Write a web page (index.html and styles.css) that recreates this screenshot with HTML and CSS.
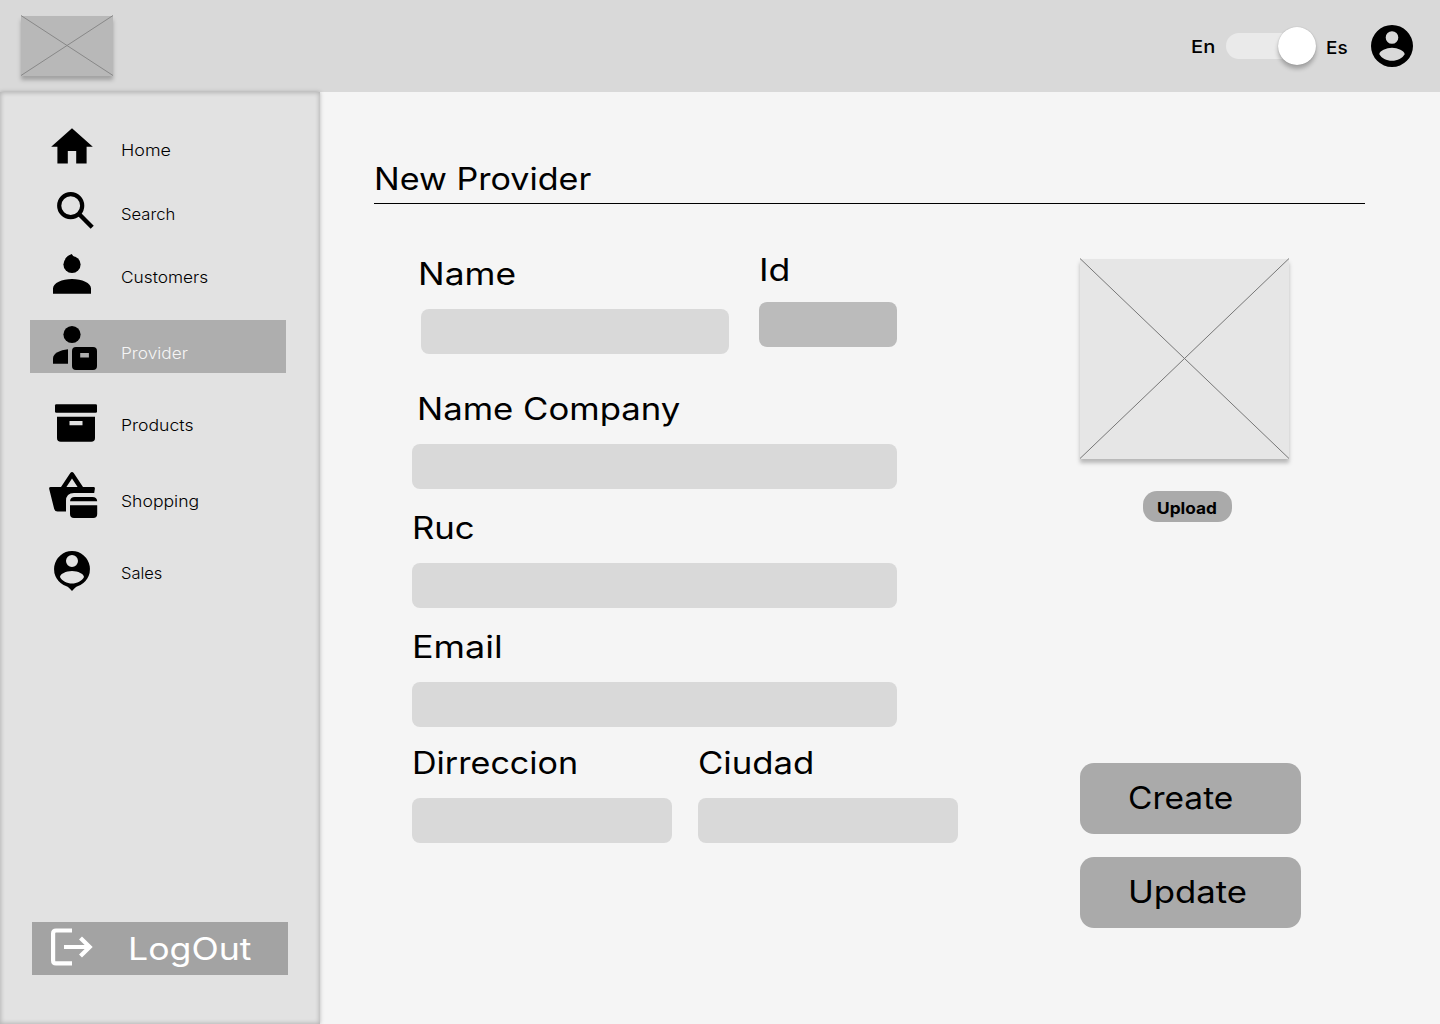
FILE: index.html
```html
<!DOCTYPE html>
<html lang="en">
<head>
<meta charset="utf-8">
<title>New Provider</title>
<link rel="stylesheet" href="styles.css">
</head>
<body>
<header class="topbar">
  <svg class="logo" viewBox="0 0 92 60"><path d="M0 -.5L92 59.500M92 -.5L0 59.500"/></svg>
  <span class="lang lang-en">En</span>
  <div class="toggle"><div class="knob"></div></div>
  <span class="lang lang-es">Es</span>
  <svg class="account" viewBox="0 0 42 42"><path fill-rule="evenodd" d="M21 0a21 21 0 1 1 0 42a21 21 0 1 1 0-42zM21 6.2a6.3 6.3 0 1 0 0 12.6a6.3 6.3 0 1 0 0-12.6zM21 22.8C15.500 22.800 8.300 26 8.300 29.200C10.500 33 15.500 35.800 21 35.800C26.500 35.800 31.500 33 33.700 29.200C33.700 26 26.500 22.800 21 22.800z"/></svg>
</header>
<div class="page">
  <aside class="sidebar">
    <nav class="menu">
      <a class="item"><svg class="icon" viewBox="47 117 52 53"><path d="M67.8 163.600v-12.500h8.400v12.500h10.400v-16.800h6.200L72 128.200L51.200 146.800h6.200v16.800z"/></svg><span class="t-home">Home</span></a>
      <a class="item search"><svg class="icon" viewBox="47 181 52 53"><g fill="none" stroke="#000"><circle cx="70.700" cy="205.700" r="11.500" stroke-width="4.200"/><path d="M79 214L92.200 227.200" stroke-width="4.400"/></g></svg><span class="t-search">Search</span></a>
      <a class="item customers"><svg class="icon" viewBox="47 244 52 53"><circle cx="72" cy="264.500" r="8.600"/><path d="M65 259.500C66.500 256.500 69 255 71.700 253.900L73.500 256.400L78 259.500zM53 293.700v-5.200C53 283 62 279 72 279s19 4 19 9.500v5.200z"/></svg><span class="t-customers">Customers</span></a>
      <a class="item provider"><svg class="icon" viewBox="47 320 52 53"><circle cx="72" cy="334.500" r="8.600"/><path d="M53 363.700v-5.500C53 353.500 60 350 68 349.300v14.400z"/><path fill-rule="evenodd" d="M76 347h17a4 4 0 0 1 4 4v15a4 4 0 0 1-4 4H76a4 4 0 0 1-4-4v-15a4 4 0 0 1 4-4zM80.200 353v4.400h8.700V353z"/></svg><span class="t-provider">Provider</span></a>
      <a class="item products"><svg class="icon" viewBox="47 392 52 53"><rect x="55" y="404.200" width="42" height="8.500" rx="1.300"/><path fill-rule="evenodd" d="M57 416.700h38V438q0 3.800-3.800 3.800H60.800Q57 441.800 57 438zM69.500 421v4.200h13V421z"/></svg><span class="t-products">Products</span></a>
      <a class="item shopping"><svg class="icon" viewBox="47 468 52 53"><path fill-rule="evenodd" d="M70.300 472.900q1.700-1.900 3.400 0L83 487h10.500q1.500 0 1.400 1.500l-.7 4.500H74q-8 0-8 8v10.500H57.500q-2.500 0-3.300-2.600L49.200 489q-.4-2 1.500-2H61zM72 478.500L66.400 487h11.200z"/><path d="M70 501.200q.5-4.200 4.700-4.200H92.500q4.300 0 4.700 4.200zM70 505.200h27.200V514q0 4-4 4H74q-4 0-4-4z"/></svg><span class="t-shopping">Shopping</span></a>
      <a class="item sales"><svg class="icon" viewBox="47 540 52 53"><path fill-rule="evenodd" d="M72 551a18.100 18.100 0 0 1 5.500 35.300Q75.500 587 72 591Q68.500 587 66.500 586.300A18.100 18.100 0 0 1 72 551zM72 554.900a6 6 0 1 0 0 12a6 6 0 1 0 0-12zM72 571C66 571 60 574 60 577C62 581 67 583.500 72 583.500S82 581 84 577C84 574 78 571 72 571z"/></svg><span class="t-sales">Sales</span></a>
    </nav>
    <button class="logout"><svg class="exit" viewBox="-1 -.4 44 40"><g fill="none" stroke="#fff" stroke-width="4.200"><path d="M22 3.100H6Q3.100 3.100 3.100 6V33Q3.100 36 6 36H22"/><path d="M14 19.600H40M30.500 10.500L39.700 19.600L30.500 28.700"/></g></svg><span>LogOut</span></button>
  </aside>
  <main class="content">
    <h1 class="title"><span>New Provider</span></h1>
    <div class="columns">
      <form class="form">
        <div class="row first">
          <div class="field name"><label class="l-name">Name</label><div class="input"></div></div>
          <div class="field id"><label class="l-id">Id</label><div class="input readonly"></div></div>
        </div>
        <div class="field company"><label class="l-company">Name Company</label><div class="input"></div></div>
        <div class="field"><label class="l-ruc">Ruc</label><div class="input"></div></div>
        <div class="field"><label class="l-email">Email</label><div class="input"></div></div>
        <div class="row last">
          <div class="field half"><label class="l-dir">Dirreccion</label><div class="input"></div></div>
          <div class="field half"><label class="l-city">Ciudad</label><div class="input"></div></div>
        </div>
      </form>
      <section class="side">
        <svg class="photo" viewBox="0 0 209 200"><path d="M0 -.5L209 199.500M209 -.5L0 199.500"/></svg>
        <button class="upload"><span>Upload</span></button>
        <button class="action create"><span>Create</span></button>
        <button class="action update"><span>Update</span></button>
      </section>
    </div>
  </main>
</div>
</body>
</html>
```
FILE: styles.css
```css
* { box-sizing: border-box; }
body {
  margin: 0;
  width: 1440px;
  height: 1024px;
  overflow: hidden;
  background: #f5f5f5;
  color: #000;
  font-family: Inter, sans-serif;
}
button { border: 0; padding: 0; font-family: inherit; color: #000; text-align: left; }
svg { display: block; flex: none; }

/* wide lettering: --w is the horizontal stretch of the text */
span, label {
  --w: 1.12;
  display: inline-block;
  align-self: flex-start;
  white-space: nowrap;
  transform: scaleX(var(--w));
  transform-origin: 0 50%;
}

.topbar { display: flex; height: 92px; background: #d9d9d9; padding-left: 21px; }
.logo { width: 92px; height: 60px; margin-top: 16px; background: #b8b8b8; box-shadow: 0 4px 4px rgba(0,0,0,.25); overflow: visible; }
.logo path { stroke: #888; stroke-width: 1; fill: none; }
.lang { font-size: 17.500px; font-weight: 450; line-height: 24px; }
.lang-en { --w: 1.15; margin: 35px 0 0 1077.500px; width: 35.500px; }
.toggle { width: 89.500px; height: 26px; margin-top: 33px; border-radius: 13px; background: #eaeaea; display: flex; justify-content: flex-end; align-items: center; }
.knob { width: 38px; height: 38px; flex: none; border-radius: 50%; background: #fff; box-shadow: 0 4px 4px rgba(0,0,0,.25), 0 0 1px rgba(0,0,0,.3); }
.lang-es { --w: 1.08; margin: 36px 0 0 10px; width: 45.500px; }
.account { width: 42px; height: 42px; margin-top: 25px; }

.page { display: flex; height: 932px; }
.sidebar {
  width: 320px;
  flex: none;
  background: #e2e2e2;
  padding: 25px 30px 0;
  box-shadow: inset 0 0 4px 1px rgba(0,0,0,.2), 0 0 4px rgba(0,0,0,.25);
  display: flex;
  flex-direction: column;
}
.item { display: flex; width: 256px; height: 53px; padding-left: 17px; font-size: 16px; font-weight: 350; line-height: 24px; }
.item span { margin: 21px 0 0 22px; }
.icon { width: 52px; height: 53px; }
.search { margin-top: 11px; }
.customers { margin-top: 10px; }
.provider { margin-top: 23px; background: #aeaeae; color: #f5f5f5; }
.products { margin-top: 19px; }
.shopping { margin-top: 23px; }
.sales { margin-top: 19px; }
.t-home { --w: 1.12; }
.t-search { --w: 1.04; }
.t-customers { --w: 1.08; }
.t-provider { --w: 1.08; }
.t-products { --w: 1.1; }
.t-shopping { --w: 1.1; }
.t-sales { --w: 1.03; }
.logout { display: flex; width: 256px; height: 53px; margin: 329px 0 0 2px; padding-left: 17px; background: #a3a3a3; color: #fff; font-size: 31px; font-weight: 400; line-height: 40px; }
.exit { width: 44px; height: 40px; margin-top: 5px; }
.logout span { --w: 1.15; margin: 7px 0 0 35px; }

.content { width: 1120px; padding: 67px 0 0 54px; }
.title { margin: 0; width: 991px; height: 45px; border-bottom: 1px solid #000; font-size: 31px; font-weight: 430; line-height: 40px; }
.title span { --w: 1.1; }
.columns { display: flex; padding-left: 38px; }
.form { width: 668px; }
.row { display: flex; }
.field { width: 485px; display: flex; flex-direction: column; }
label { font-size: 31px; font-weight: 430; line-height: 40px; height: 40px; }
.input { height: 45px; margin-top: 15px; border-radius: 8px; background: #d9d9d9; margin-bottom: 19px; }
.first { padding-top: 46px; height: 174px; }
.name { width: 308px; margin: 4px 0 0 9px; }
.id { width: 138px; margin-left: 30px; }
.readonly { background: #bbb; margin-top: 12px; }
.company { padding-top: 11px; }
.last { margin-top: -3px; gap: 26px; }
.half { width: 260px; }
.l-name { --w: 1.14; margin-left: -3px; }
.l-id { --w: 1.15; }
.l-company { --w: 1.12; margin-left: 5px; }
.l-email { --w: 1.16; }
.l-dir { --w: 1.1; }

.side { padding-top: 55px; width: 221px; }
.photo { width: 209px; height: 200px; background: #e6e6e6; box-shadow: 0 4px 4px rgba(0,0,0,.25); overflow: visible; }
.photo path { stroke: #777; stroke-width: 1; fill: none; }
.upload { display: block; width: 89px; height: 31px; margin: 32px 0 0 63px; padding: 4px 0 0 14px; border-radius: 14px; background: #aaa; font-size: 16px; font-weight: 700; line-height: 27px; }
.upload span { --w: 1.08; }
.action { display: block; width: 221px; height: 71px; padding-left: 48px; border-radius: 14px; background: #aaa; font-size: 31px; font-weight: 430; line-height: 69px; padding-bottom: 2px; }
.create { margin-top: 241px; }
.create span { --w: 1.08; }
.update { margin-top: 23px; }
```
